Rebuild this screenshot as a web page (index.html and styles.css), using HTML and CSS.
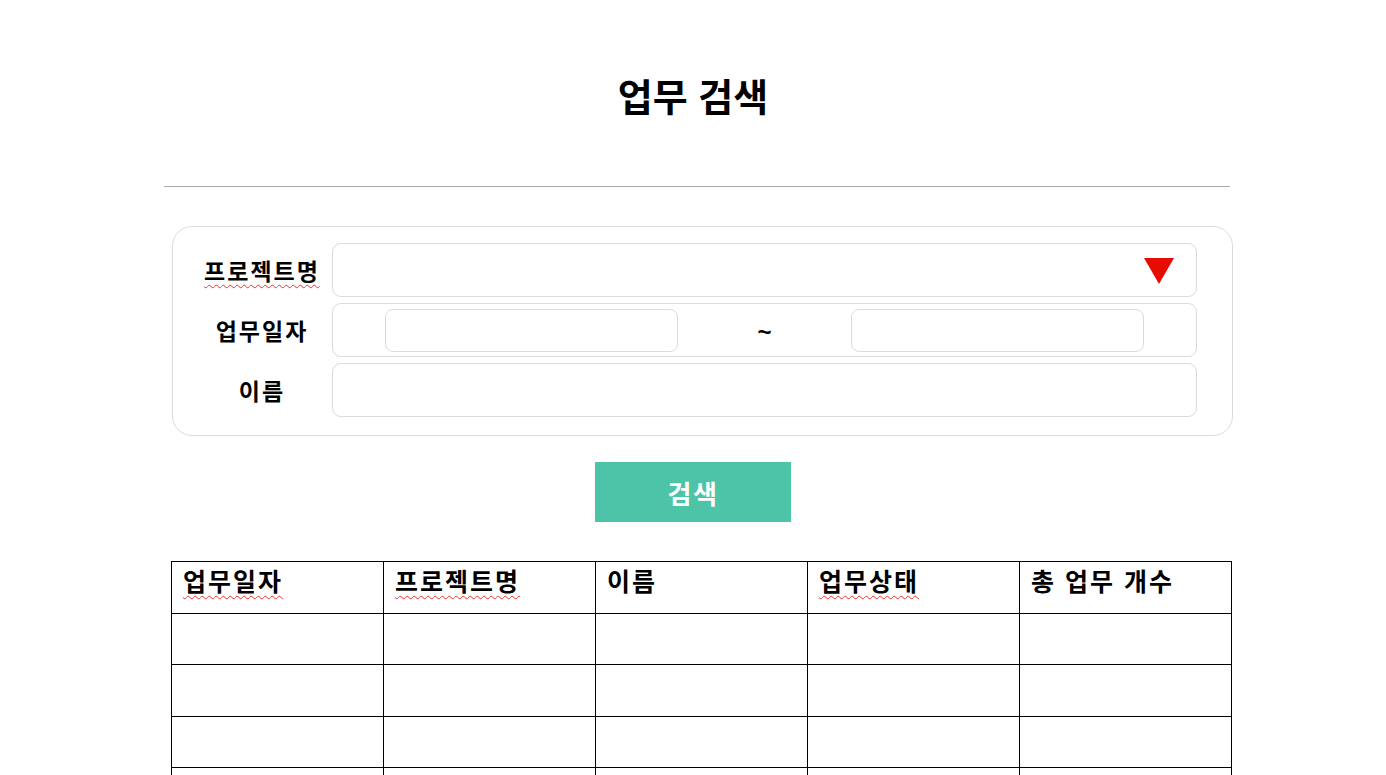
FILE: index.html
```html
<!DOCTYPE html>
<html lang="ko">
<head>
<meta charset="utf-8">
<title>업무 검색</title>
<link rel="stylesheet" href="styles.css">
</head>
<body>
<div class="page">
  <h1 class="title">업무 검색</h1>
  <div class="rule"></div>

  <div class="search-box">
    <div class="label"><span class="spell">프로젝트명</span></div>
    <div class="field select">
      <svg class="caret" width="30" height="26" viewBox="0 0 30 26"><polygon points="0,0 30,0 15,26" fill="#e80c00"/></svg>
    </div>

    <div class="label">업무일자</div>
    <div class="field dates">
      <div class="date-input"></div>
      <div class="tilde">~</div>
      <div class="date-input"></div>
    </div>

    <div class="label">이름</div>
    <div class="field"></div>
  </div>

  <div class="btn-row">
    <button class="search-btn">검색</button>
  </div>

  <table class="result">
    <thead>
      <tr>
        <th><span class="spell">업무일자</span></th>
        <th><span class="spell">프로젝트명</span></th>
        <th>이름</th>
        <th><span class="spell">업무상태</span></th>
        <th>총 업무 개수</th>
      </tr>
    </thead>
    <tbody>
      <tr class="r1"><td></td><td></td><td></td><td></td><td></td></tr>
      <tr class="r2"><td></td><td></td><td></td><td></td><td></td></tr>
      <tr class="r1"><td></td><td></td><td></td><td></td><td></td></tr>
      <tr class="r2"><td></td><td></td><td></td><td></td><td></td></tr>
    </tbody>
  </table>
</div>
</body>
</html>
```

FILE: styles.css
```css
* { box-sizing: border-box; }
html, body { margin: 0; padding: 0; background: #fff; }
body {
  font-family: "Noto Sans CJK KR", "Noto Sans", sans-serif;
  color: #000;
}
.page {
  width: 1386px;
  height: 775px;
  overflow: hidden;
}
.title {
  margin: 70px 0 0;
  height: 50px;
  line-height: 50px;
  font-size: 38px;
  font-weight: 700;
  text-align: center;
  letter-spacing: 0;
}
.rule {
  margin: 66px 0 0 164px;
  width: 1066px;
  height: 1px;
  background: #aaaaaa;
}
.search-box {
  margin: 39px 0 0 172px;
  width: 1061px;
  border: 1px solid #dcdcdc;
  border-radius: 20px;
  padding: 16px 35px 18px 17px;
  display: grid;
  grid-template-columns: 142px 1fr;
  grid-auto-rows: 54px;
  row-gap: 6px;
}
.label {
  display: flex;
  align-items: center;
  justify-content: center;
  font-size: 23px;
  font-weight: 700;
  letter-spacing: 2px;
  padding-left: 2px;
}
.spell {
  text-decoration: underline wavy #f03030;
  text-decoration-thickness: 1px;
  text-underline-offset: 4px;
}
.field {
  border: 1px solid #dcdcdc;
  border-radius: 9px;
}
.select {
  display: flex;
  align-items: center;
  justify-content: flex-end;
  padding-right: 22px;
}
.caret { display: block; margin-top: 2px; }
.dates {
  display: flex;
  align-items: center;
  justify-content: center;
}
.date-input {
  width: 293px;
  height: 43px;
  border: 1px solid #dcdcdc;
  border-radius: 8px;
}
.tilde {
  width: 173px;
  text-align: center;
  font-family: "Liberation Sans", sans-serif;
  font-size: 24px;
  font-weight: 700;
  padding-top: 4px;
}
.btn-row {
  display: flex;
  justify-content: center;
  margin-top: 26px;
}
.search-btn {
  width: 196px;
  height: 60px;
  margin-left: -1px;
  border: 0;
  background: #4dc3a8;
  color: #fff;
  font-family: "Noto Sans CJK KR", sans-serif;
  font-size: 26px;
  font-weight: 700;
  letter-spacing: 1.5px;
  padding: 0 0 0 1px;
}
.result {
  margin: 39px 0 0 171px;
  border-collapse: collapse;
  table-layout: fixed;
  width: 1061px;
}
.result th, .result td {
  width: 212px;
  border: 1px solid #000;
  padding: 0;
}
.result thead tr { border-top: 1px solid #555; }
.result th {
  height: 52px;
  text-align: left;
  vertical-align: top;
  padding: 2px 0 0 11px;
  font-size: 25px;
  line-height: 32px;
  font-weight: 700;
  letter-spacing: 2px;
}
.result tr.r1 td { height: 51px; }
.result tr.r2 td { height: 52px; }
```
